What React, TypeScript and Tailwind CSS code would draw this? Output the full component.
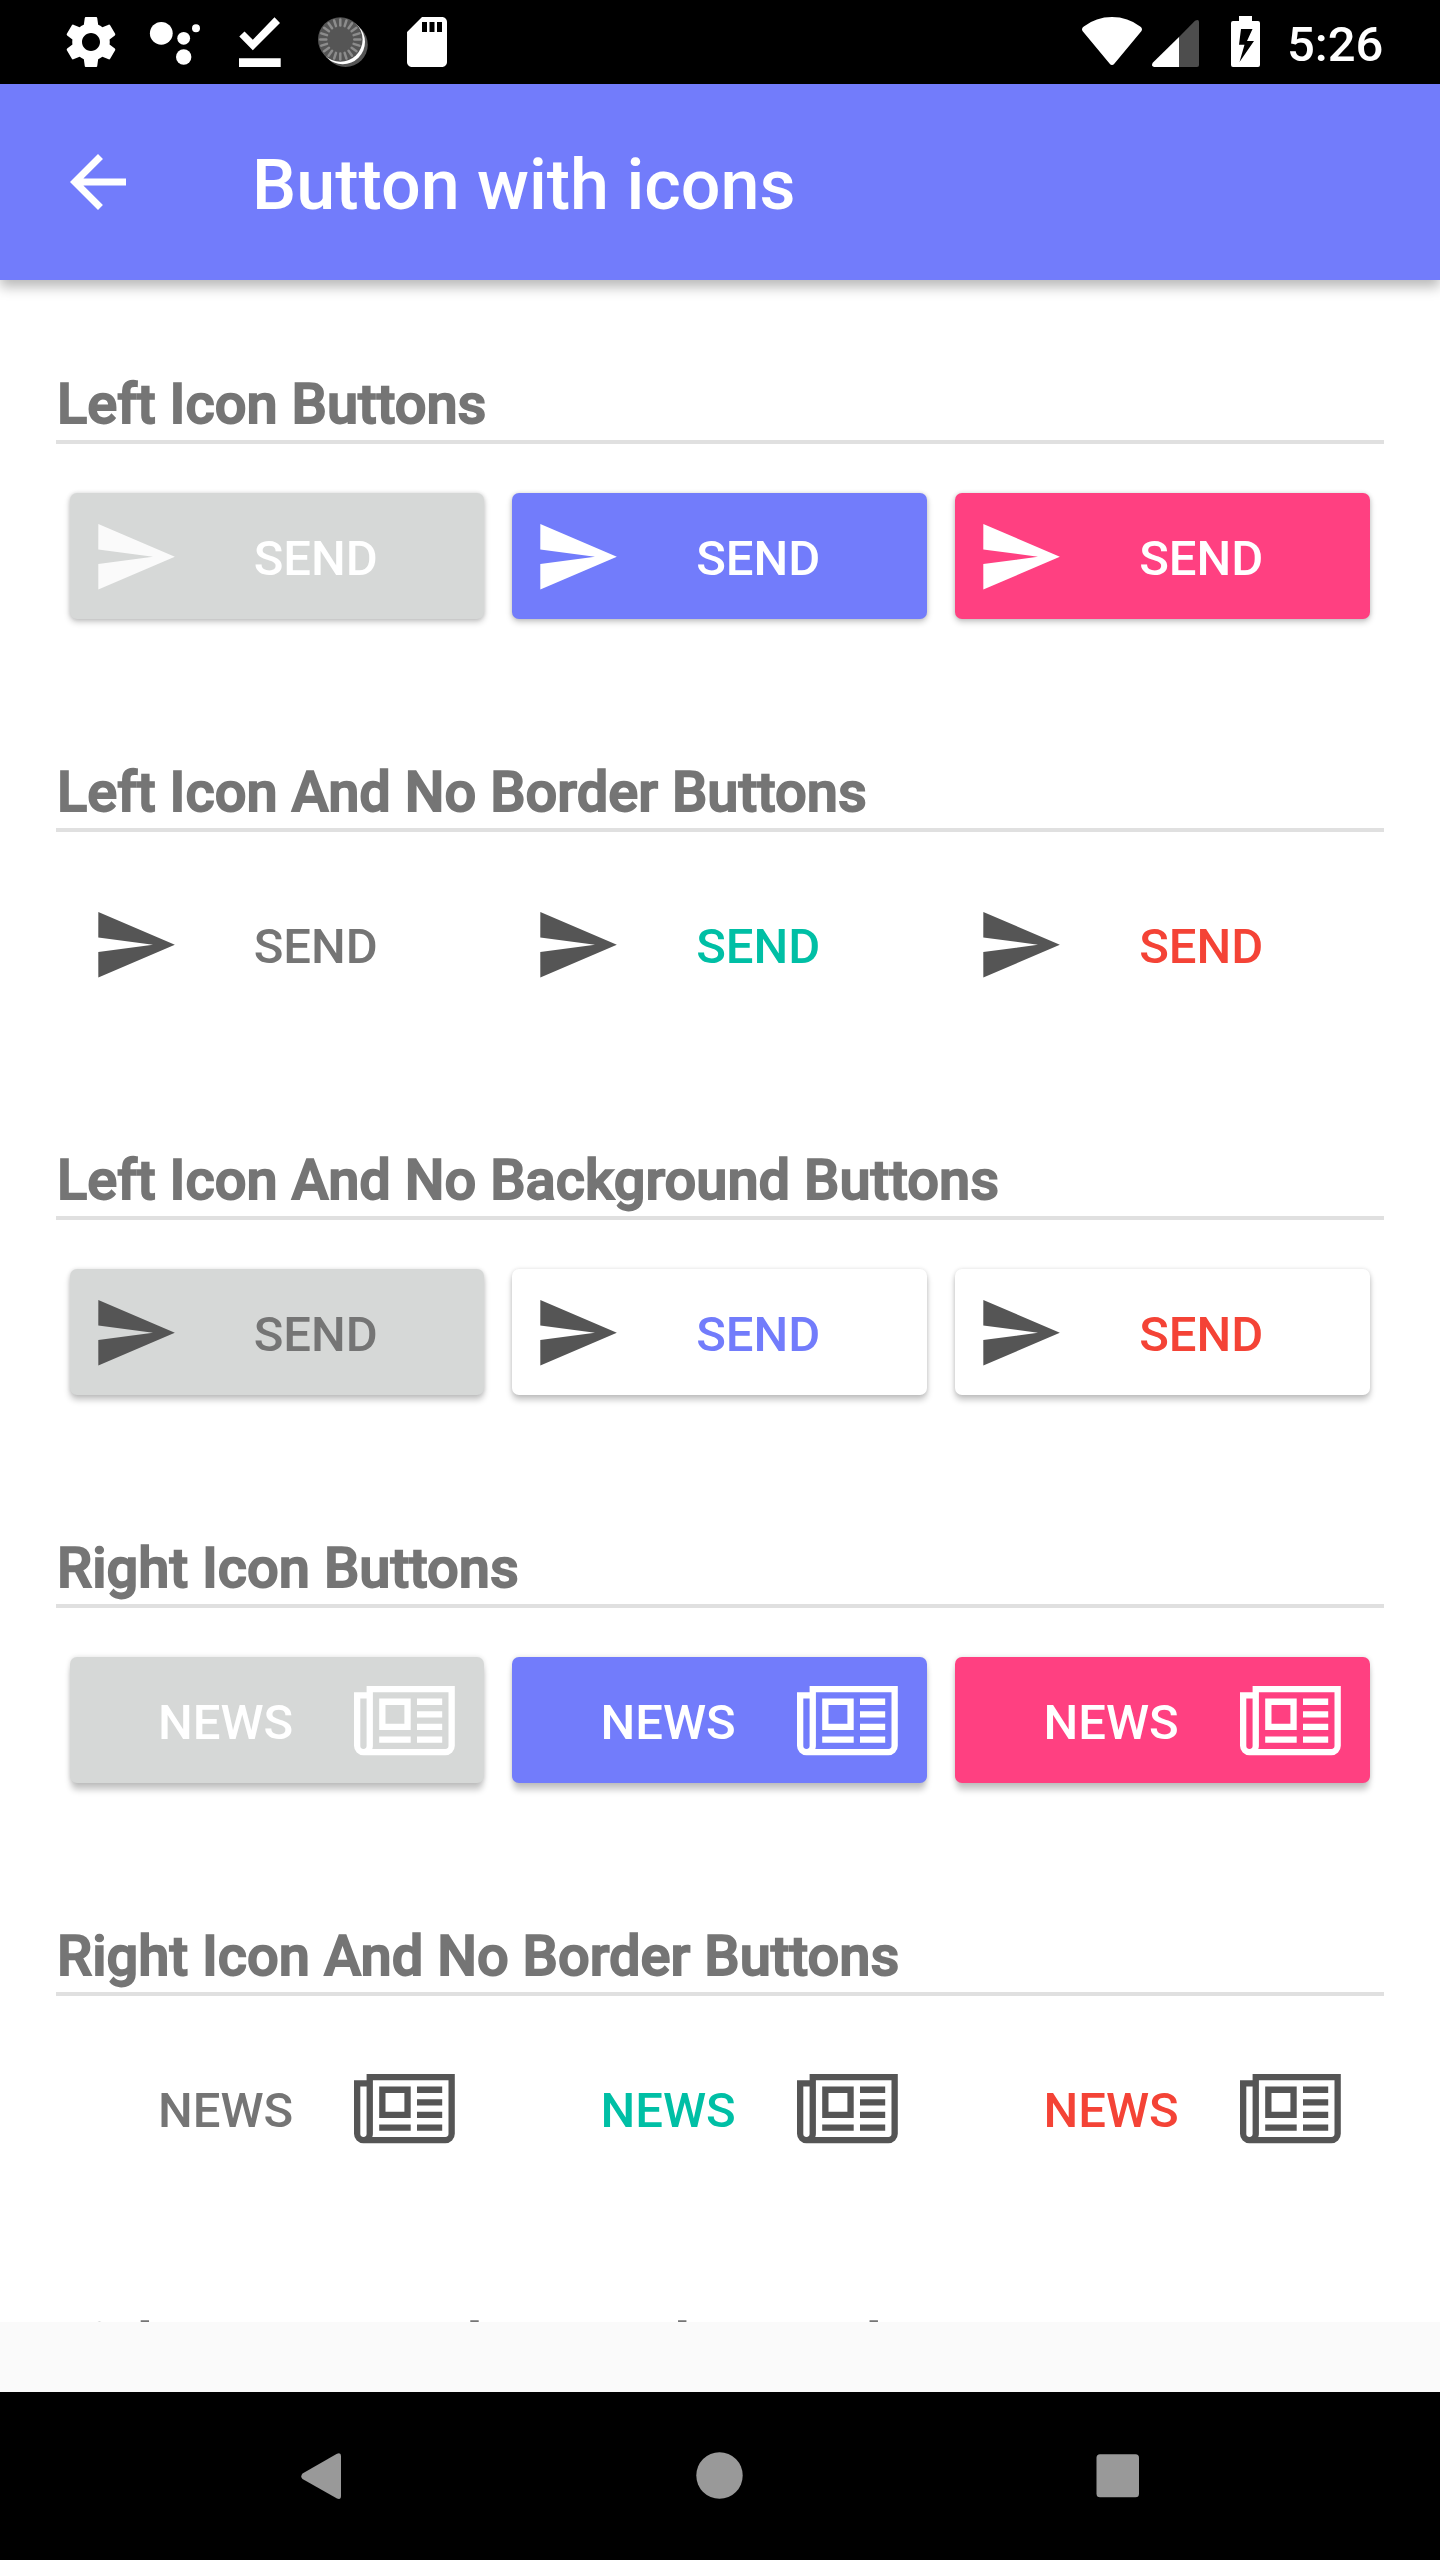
import type { ReactNode } from "react";

function SendIcon({ className }: { className: string }) {
  return (
    <svg viewBox="0 0 24 24" className={`size-[87.5px] shrink-0 ${className}`} fill="currentColor">
      <path d="M2.01 21L23 12 2.01 3 2 10l15 2-15 2z" />
    </svg>
  );
}

function NewsIcon({ className }: { className: string }) {
  return (
    <svg viewBox="0 0 16 11" className={`h-[69.3px] w-[100.8px] shrink-0 ${className}`} fill="currentColor" fillRule="evenodd">
      <path d="M0 1H2V0H16V9.5A1.5 1.5 0 0 1 14.500 11H1.5A1.5 1.5 0 0 1 0 9.5ZM1 2V9.5A.5.5 0 0 0 2 9.500V2ZM3 1V9.500Q3 9.8 2.900 10H14.500A.5.5 0 0 0 15 9.500V1Z" />
      <path d="M4 2H9V7H4ZM5 3V6H8V3ZM4 8H9V9H4ZM10 2H14V3H10ZM10 4H14V5H10ZM10 6H14V7H10ZM10 8H14V9H10Z" />
    </svg>
  );
}

type Kind = "send" | "news";
type Style = { box: string; text: string; icon: string };

const LOW = "shadow-[0_3px_6px_rgba(0,0,0,0.22),0_0_4px_rgba(0,0,0,0.12)]";
const MID = "shadow-[0_5px_6px_rgba(0,0,0,0.22),0_0_4px_rgba(0,0,0,0.12)]";
const HIGH = "shadow-[0_8px_6px_-1px_rgba(0,0,0,0.21),0_0_5px_rgba(0,0,0,0.13)]";

const filled = (shadow: string, firstIcon: string): Style[] => [
  { box: `bg-[#d6d8d7] ${shadow}`, text: "text-white", icon: firstIcon },
  { box: `bg-[#727cfb] ${shadow}`, text: "text-white", icon: "text-white" },
  { box: `bg-[#ff4081] ${shadow}`, text: "text-white", icon: "text-white" },
];

const borderless: Style[] = [
  { box: "", text: "text-[#757575]", icon: "text-[#555555]" },
  { box: "", text: "text-[#00bfa5]", icon: "text-[#555555]" },
  { box: "", text: "text-[#f44336]", icon: "text-[#555555]" },
];

const plain: Style[] = [
  { box: `bg-[#d6d8d7] ${MID}`, text: "text-[#757575]", icon: "text-[#555555]" },
  { box: `bg-white ${MID}`, text: "text-[#727cfb]", icon: "text-[#555555]" },
  { box: `bg-white ${MID}`, text: "text-[#f44336]", icon: "text-[#555555]" },
];

const sections: { title: string; kind: Kind; styles: Style[] }[] = [
  { title: "Left Icon Buttons", kind: "send", styles: filled(LOW, "text-[#fafafa]") },
  { title: "Left Icon And No Border Buttons", kind: "send", styles: borderless },
  { title: "Left Icon And No Background Buttons", kind: "send", styles: plain },
  { title: "Right Icon Buttons", kind: "news", styles: filled(HIGH, "text-white") },
  { title: "Right Icon And No Border Buttons", kind: "news", styles: borderless },
];

function IconButton({ kind, style }: { kind: Kind; style: Style }) {
  return (
    <button
      className={`mx-[14px] flex h-[126px] items-center rounded-[7px] text-[49px] leading-none font-medium ${style.box}`}
    >
      {kind === "send" ? (
        <>
          <SendIcon className={`mt-[1.5px] ml-[21px] ${style.icon}`} />
          <span className={`mr-[31px] flex-1 pt-[5px] text-center ${style.text}`}>SEND</span>
        </>
      ) : (
        <>
          <span className={`ml-[27px] flex-1 pt-[5px] text-center ${style.text}`}>NEWS</span>
          <NewsIcon className={`mt-[2px] mr-[29px] ${style.icon}`} />
        </>
      )}
    </button>
  );
}

function Heading({ children }: { children: string }) {
  return (
    <h2 className="h-[66px] pl-px text-[56px] leading-[66px] font-medium whitespace-nowrap text-[#757575] [-webkit-text-stroke:1.75px_#757575]">
      {children}
    </h2>
  );
}

function Section({ title, kind, styles }: { title: string; kind: Kind; styles: Style[] }) {
  return (
    <section className="flex h-[388px] shrink-0 flex-col">
      <Heading>{title}</Heading>
      <div className="mt-[3px] h-[4px] shrink-0 bg-[#e0e0e0]" />
      <div className="mt-[49px] grid grid-cols-[442px_443px_443px]">
        {styles.map((s, i) => (
          <IconButton key={i} kind={kind} style={s} />
        ))}
      </div>
    </section>
  );
}

function StatusGlyph({ children }: { children: ReactNode }) {
  return (
    <svg viewBox="0 0 60 60" className="size-[60px]" fill="#fff">
      {children}
    </svg>
  );
}

const ticks = Array.from({ length: 20 }, (_, i) => i * 18);

function StatusBar() {
  return (
    <div className="flex h-[84px] shrink-0 items-center bg-black pl-[61px] text-white">
      <div className="flex gap-6">
        <StatusGlyph>
          <path
            transform="scale(2.5)"
            d="M19.43 12.98c.04-.32.07-.64.07-.98s-.03-.66-.07-.98l2.110-1.650c.19-.15.24-.42.12-.64l-2-3.460c-.12-.22-.39-.3-.61-.22l-2.490 1c-.52-.4-1.080-.73-1.690-.98l-.38-2.650C14.460 2.180 14.250 2 14 2h-4c-.25 0-.46.18-.49.42l-.38 2.650c-.61.25-1.170.59-1.690.98l-2.490-1c-.23-.09-.49 0-.61.22l-2 3.460c-.13.22-.07.49.12.64l2.110 1.650c-.04.32-.07.65-.07.98s.03.66.07.98l-2.110 1.650c-.19.15-.24.42-.12.64l2 3.460c.12.22.39.3.61.22l2.490-1c.52.4 1.080.73 1.690.98l.38 2.650c.03.24.24.42.49.42h4c.25 0 .46-.18.49-.42l.38-2.650c.61-.25 1.170-.59 1.690-.98l2.490 1c.23.09.49 0 .61-.22l2-3.460c.12-.22.07-.49-.12-.64l-2.110-1.650zM12 15.600c-1.990 0-3.600-1.610-3.600-3.600s1.610-3.600 3.600-3.600 3.600 1.610 3.600 3.600-1.610 3.600-3.600 3.600z"
          />
        </StatusGlyph>
        <StatusGlyph>
          <circle cx="16.3" cy="21.3" r="11.4" />
          <circle cx="38.7" cy="26.3" r="6.4" />
          <circle cx="51" cy="16.2" r="4" />
          <circle cx="38.7" cy="45" r="7.700" />
        </StatusGlyph>
        <StatusGlyph>
          <path d="M10.300 24.500L15.500 19.500L23.800 27.800L45.500 5.200L51 11L23.800 38.300ZM10 46.300H51.700V55H10Z" />
        </StatusGlyph>
        <StatusGlyph>
          <circle cx="32.500" cy="32.700" r="22.300" fill="#555" />
          <circle cx="29.700" cy="30" r="22.300" />
          <circle cx="27.300" cy="27.500" r="22.300" fill="#555" />
          {ticks.map((a) => (
            <path key={a} d="M27.300 7.500V13.500" stroke="#8c8c8c" strokeWidth="2.500" strokeLinecap="round" transform={`rotate(${a} 27.300 27.500)`} />
          ))}
        </StatusGlyph>
        <StatusGlyph>
          <path
            transform="scale(2.5)"
            d="M18 2h-8L4.020 8 4 20c0 1.100.9 2 2 2h12c1.100 0 2-.9 2-2V4c0-1.100-.9-2-2-2zm-6 6h-2V4h2v4zm3 0h-2V4h2v4zm3 0h-2V4h2v4z"
          />
        </StatusGlyph>
      </div>
      <svg viewBox="0 0 180 60" className="ml-[624px] h-[60px] w-[180px] shrink-0" fill="#fff">
        <path d="M2.800 14.500Q15 5 31 5T59.200 14.500Q62 16.500 60.500 19L33.500 51.500Q31 54.500 28.500 51.500L1.500 19Q0 16.500 2.800 14.500Z" />
        <path d="M98 25V55H73Q69.500 54 72 50.500Z" />
        <path d="M98 25L114 8.800Q118 6.500 118 10V53Q118 55 116 55H98Z" fill="#4d4d4d" />
        <path fillRule="evenodd" d="M158 4H171V9H177Q179 9 179 11V53Q179 55 177 55H152Q150 55 150 53V11Q150 9 152 9H158ZM160 17L158 32.800H163.500L158.500 50L173 29H166L171.500 17Z" />
      </svg>
      <span className="ml-[26px] pt-[4px] text-[49px] leading-none font-medium">5:26</span>
    </div>
  );
}

function AppBar() {
  return (
    <header className="relative z-10 flex h-[196px] shrink-0 items-center bg-[#727cfb] pl-[56px] text-white shadow-[0_7px_12px_rgba(0,0,0,0.28)]">
      <svg viewBox="0 0 24 24" className="size-[84px]" fill="currentColor">
        <path d="M20 11H7.830l5.590-5.590L12 4l-8 8 8 8 1.410-1.410L7.830 13H20v-2z" />
      </svg>
      <h1 className="ml-[112px] pt-[6px] text-[70px] leading-none font-medium">Button with icons</h1>
    </header>
  );
}

function NavBar() {
  return (
    <nav className="flex h-[168px] shrink-0 items-center bg-black pl-[301px]">
      <svg viewBox="0 0 840 48" className="h-[48px] w-[840px]" fill="#999">
        <path d="M1.500 21.500L35.500 2Q40 0 40 4V44Q40 48 36 46.500L1.500 27Q-1 24.500 1.500 21.500Z" />
        <circle cx="418.500" cy="23.500" r="23.200" />
        <rect x="795.500" y="2.200" width="42.500" height="43" rx="3.500" />
      </svg>
    </nav>
  );
}

export default function App() {
  return (
    <div className="flex h-[2560px] w-[1440px] flex-col overflow-hidden bg-[#fafafa] font-[Roboto,sans-serif]">
      <StatusBar />
      <AppBar />
      <main className="flex h-[2042px] shrink-0 flex-col overflow-hidden bg-white px-[56px] pt-[91px]">
        {sections.map((s) => (
          <Section key={s.title} {...s} />
        ))}
        <Heading>Right Button And No Background Buttons</Heading>
      </main>
      <div className="h-[70px] shrink-0" />
      <NavBar />
    </div>
  );
}
